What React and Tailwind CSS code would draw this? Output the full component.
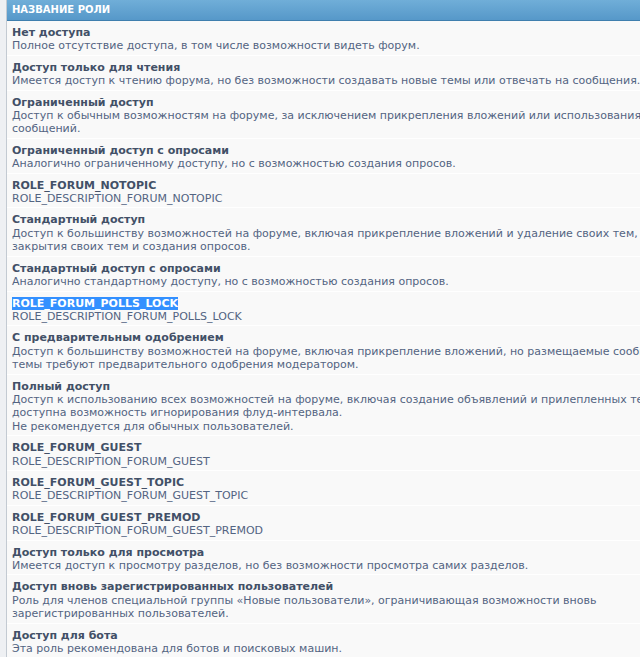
import React from 'react';

const roles = [
  { title: 'Нет доступа', lines: ['Полное отсутствие доступа, в том числе возможности видеть форум.'] },
  { title: 'Доступ только для чтения', lines: ['Имеется доступ к чтению форума, но без возможности создавать новые темы или отвечать на сообщения.'] },
  {
    title: 'Ограниченный доступ',
    lines: ['Доступ к обычным возможностям на форуме, за исключением прикрепления вложений или использования значков', 'сообщений.'],
  },
  { title: 'Ограниченный доступ с опросами', lines: ['Аналогично ограниченному доступу, но с возможностью создания опросов.'] },
  { title: 'ROLE_FORUM_NOTOPIC', lines: ['ROLE_DESCRIPTION_FORUM_NOTOPIC'] },
  {
    title: 'Стандартный доступ',
    lines: ['Доступ к большинству возможностей на форуме, включая прикрепление вложений и удаление своих тем, но исключая', 'закрытия своих тем и создания опросов.'],
  },
  { title: 'Стандартный доступ с опросами', lines: ['Аналогично стандартному доступу, но с возможностью создания опросов.'] },
  { title: 'ROLE_FORUM_POLLS_LOCK', lines: ['ROLE_DESCRIPTION_FORUM_POLLS_LOCK'], selected: true },
  {
    title: 'С предварительным одобрением',
    lines: ['Доступ к большинству возможностей на форуме, включая прикрепление вложений, но размещаемые сообщения и', 'темы требуют предварительного одобрения модератором.'],
  },
  {
    title: 'Полный доступ',
    lines: [
      'Доступ к использованию всех возможностей на форуме, включая создание объявлений и прилепленных тем. Также',
      'доступна возможность игнорирования флуд-интервала.',
      'Не рекомендуется для обычных пользователей.',
    ],
  },
  { title: 'ROLE_FORUM_GUEST', lines: ['ROLE_DESCRIPTION_FORUM_GUEST'] },
  { title: 'ROLE_FORUM_GUEST_TOPIC', lines: ['ROLE_DESCRIPTION_FORUM_GUEST_TOPIC'] },
  { title: 'ROLE_FORUM_GUEST_PREMOD', lines: ['ROLE_DESCRIPTION_FORUM_GUEST_PREMOD'] },
  { title: 'Доступ только для просмотра', lines: ['Имеется доступ к просмотру разделов, но без возможности просмотра самих разделов.'] },
  {
    title: 'Доступ вновь зарегистрированных пользователей',
    lines: ['Роль для членов специальной группы «Новые пользователи», ограничивающая возможности вновь', 'зарегистрированных пользователей.'],
  },
  { title: 'Доступ для бота', lines: ['Эта роль рекомендована для ботов и поисковых машин.'] },
];

const App = () => {
  return (
    <div
      className="w-[640px] h-[657px] overflow-hidden flex bg-[#eef0f3]"
      style={{ fontFamily: '"DejaVu Sans", Verdana, sans-serif' }}
    >
      <div className="w-[6px] shrink-0" />
      <div className="flex-1 min-w-0 overflow-hidden border-l border-[#c3cad2] bg-[#fafafa]">
        {/* table header */}
        <div className="h-[21px] pl-[5px] flex items-center bg-gradient-to-b from-[#70aed8] to-[#5698c9] border-b border-[#3f7fae]">
          <span className="text-[10px] font-bold text-white uppercase leading-none whitespace-nowrap">Название роли</span>
        </div>

        {roles.map((role) => (
          <div
            key={role.title}
            className="pl-[5px] pt-[5px] pb-[2px] border-b border-white bg-[#f9f9f9] text-[11px] leading-[13.4px] whitespace-nowrap"
          >
            <div className="font-bold text-[#425067]">
              {role.selected ? (
                <span className="bg-[#3390ff] text-white">{role.title}</span>
              ) : (
                role.title
              )}
            </div>
            {role.lines.map((line) => (
              <div key={line} className="text-[#536482]">
                {line}
              </div>
            ))}
          </div>
        ))}
      </div>
    </div>
  );
};

export default App;
